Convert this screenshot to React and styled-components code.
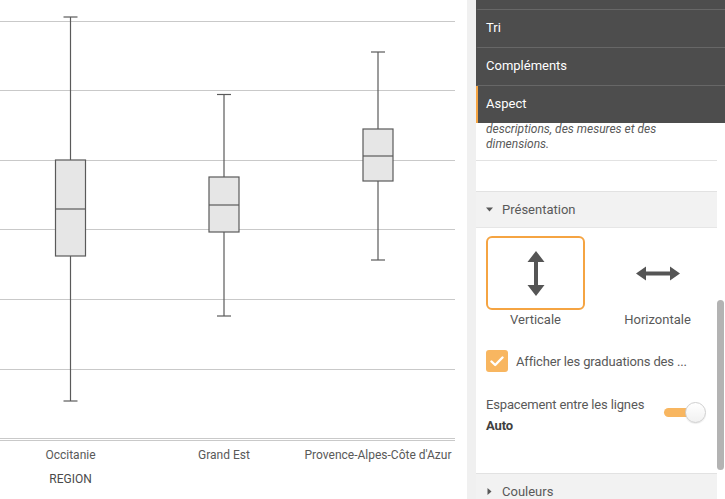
import React from "react";
import styled, { createGlobalStyle } from "styled-components";

const Global = createGlobalStyle`
  html, body { margin: 0; padding: 0; background: #fff; }
  body { font-family: Roboto, "Noto Sans", "Liberation Sans", sans-serif; overflow: hidden; }
  * { box-sizing: border-box; }
`;

const ORANGE = "#f5a442";
const ORANGE_SOFT = "#f8b660";

const Page = styled.div`
  display: flex;
  width: 725px;
  height: 499px;
  overflow: hidden;
  background: #fff;
`;

const ChartArea = styled.div`
  flex: none;
  width: 467px;
  height: 499px;
  svg { display: block; }
`;

const Gutter = styled.div`
  flex: none;
  width: 9px;
  background: #f0f0f0;
`;

const Panel = styled.div`
  flex: 1;
  min-width: 0;
  display: flex;
  flex-direction: column;
`;

const Nav = styled.nav`
  flex: none;
  background: #4d4d4d;
`;

const NavItem = styled.div`
  height: ${(p) => p.$h}px;
  display: flex;
  align-items: center;
  padding-left: 8px;
  padding-bottom: 2px;
  color: #fff;
  font-size: 13px;
  border-left: 2px solid ${(p) => (p.$active ? ORANGE : "transparent")};
  border-bottom: ${(p) => (p.$last ? "none" : "1px solid #676767")};
  overflow: hidden;
`;

const Content = styled.div`
  flex: 1;
  min-height: 0;
  display: flex;
`;

const ScrollBody = styled.div`
  flex: 1;
  min-width: 0;
  overflow: hidden;
  display: flex;
  flex-direction: column;
`;

const ScrollTrack = styled.div`
  flex: none;
  width: 8px;
  padding-top: 177px;
`;

const Thumb = styled.div`
  width: 7px;
  height: 170px;
  border-radius: 4px;
  background: #b3b3b3;
`;

const Description = styled.p`
  margin: -1px 0 0;
  padding: 0 10px 8px;
  font-size: 12px;
  line-height: 15px;
  font-style: italic;
  color: #595959;
  border-bottom: 1px solid #e2e2e2;
`;

const Spacer = styled.div`
  height: 30px;
  flex: none;
`;

const SectionHeader = styled.div`
  flex: none;
  height: 37px;
  display: flex;
  align-items: center;
  gap: 9px;
  padding-left: 10px;
  background: #f2f2f2;
  border-top: 1px solid #e2e2e2;
  border-bottom: 1px solid #e6e6e6;
  color: #595959;
  font-size: 13px;
`;

const SectionBody = styled.div`
  padding: 8px 10px 0;
  height: ${(p) => p.$h}px;
  flex: none;
`;

const Options = styled.div`
  display: grid;
  grid-template-columns: 1fr 1fr;
  column-gap: 23px;
`;

const Option = styled.div`
  display: flex;
  flex-direction: column;
  align-items: center;
`;

const OptionCard = styled.div`
  width: 100%;
  height: 74px;
  display: flex;
  align-items: center;
  justify-content: center;
  border: 2px solid ${(p) => (p.$selected ? ORANGE : "transparent")};
  border-radius: 6px;
`;

const OptionLabel = styled.div`
  margin-top: 2px;
  font-size: 13px;
  line-height: 16px;
  color: #595959;
`;

const CheckRow = styled.label`
  margin-top: 22px;
  display: flex;
  align-items: center;
  gap: 8px;
  font-size: 13px;
  letter-spacing: -0.15px;
  color: #595959;
  white-space: nowrap;
`;

const CheckBox = styled.span`
  flex: none;
  width: 22px;
  height: 22px;
  border-radius: 3px;
  background: ${ORANGE_SOFT};
  display: flex;
  align-items: center;
  justify-content: center;
`;

const SpacingRow = styled.div`
  margin-top: 25px;
  display: flex;
  justify-content: space-between;
  align-items: flex-start;
  padding-right: 1px;
`;

const SpacingText = styled.div`
  font-size: 13px;
  line-height: 16px;
  letter-spacing: -0.15px;
  color: #595959;
`;

const SpacingValue = styled.div`
  margin-top: 5px;
  font-weight: 700;
  color: #404040;
`;

const Toggle = styled.div`
  position: relative;
  margin-top: 5px;
  width: 42px;
  height: 21px;
`;

const ToggleTrack = styled.span`
  position: absolute;
  left: 0;
  top: 6px;
  width: 36px;
  height: 9px;
  border-radius: 5px;
  background: ${ORANGE_SOFT};
`;

const ToggleKnob = styled.span`
  position: absolute;
  right: 0;
  top: 0;
  width: 21px;
  height: 21px;
  border-radius: 50%;
  background: linear-gradient(#ffffff, #f1f1f1);
  border: 1px solid #cfcfcf;
  box-shadow: 0 1px 1px rgba(0, 0, 0, 0.08);
`;

const Caret = ({ open }) => (
  <svg width="7" height="7" viewBox="0 0 7 7">
    {open ? (
      <polygon points="0,1.5 7,1.5 3.5,5.5" fill="#595959" />
    ) : (
      <polygon points="1.5,0 5.5,3.5 1.5,7" fill="#595959" />
    )}
  </svg>
);

const VerticalArrow = () => (
  <svg width="18" height="45" viewBox="0 0 18 45">
    <polygon points="9,0 17.5,11 11,11 11,34 17.5,34 9,45 0.5,34 7,34 7,11 0.5,11" fill="#555" />
  </svg>
);

const HorizontalArrow = () => (
  <svg width="44" height="15" viewBox="0 0 44 15">
    <polygon points="0,7.5 10,0.5 10,5.5 34,5.5 34,0.5 44,7.5 34,14.5 34,9.5 10,9.5 10,14.5" fill="#555" />
  </svg>
);

const grid = [21, 90, 160, 229, 299, 369];
const boxes = [
  { cx: 70.5, top: 17, q3: 160, med: 209, q1: 256, low: 401, label: "Occitanie" },
  { cx: 224, top: 94.5, q3: 177, med: 205, q1: 232, low: 316, label: "Grand Est" },
  { cx: 378, top: 52, q3: 129, med: 156, q1: 181, low: 260, label: "Provence-Alpes-Côte d'Azur" },
];

const BoxPlot = () => (
  <svg width="467" height="499" viewBox="0 0 467 499">
    {grid.map((y) => (
      <line key={y} x1="0" x2="455" y1={y + 0.5} y2={y + 0.5} stroke="#c9c9c9" strokeWidth="1" />
    ))}
    <line x1="0" x2="455" y1="438.5" y2="438.5" stroke="#c9c9c9" strokeWidth="1" />
    <line x1="0" x2="455" y1="440.5" y2="440.5" stroke="#c9c9c9" strokeWidth="1" />
    {boxes.map((b) => (
      <g key={b.label} stroke="#5a5a5a" strokeWidth="1.2" fill="none">
        <line x1={b.cx} x2={b.cx} y1={b.top} y2={b.q3} />
        <line x1={b.cx} x2={b.cx} y1={b.q1} y2={b.low} />
        <line x1={b.cx - 7} x2={b.cx + 7} y1={b.top} y2={b.top} />
        <line x1={b.cx - 7} x2={b.cx + 7} y1={b.low} y2={b.low} />
        <rect x={b.cx - 15} y={b.q3} width="30" height={b.q1 - b.q3} fill="#e6e6e6" />
        <line x1={b.cx - 15} x2={b.cx + 15} y1={b.med} y2={b.med} />
        <text
          x={b.cx}
          y="459"
          textAnchor="middle"
          fill="#595959"
          stroke="none"
          fontSize="12"
          fontFamily="Roboto, sans-serif"
        >
          {b.label}
        </text>
      </g>
    ))}
    <text x="70.5" y="483" textAnchor="middle" fill="#4a4a4a" fontSize="12" fontFamily="Roboto, sans-serif">
      REGION
    </text>
  </svg>
);

export default function App() {
  return (
    <>
      <Global />
      <Page>
        <ChartArea>
          <BoxPlot />
        </ChartArea>
        <Gutter />
        <Panel>
          <Nav>
            <NavItem $h={10} />
            <NavItem $h={38}>Tri</NavItem>
            <NavItem $h={38}>Compléments</NavItem>
            <NavItem $h={37} $active $last>
              Aspect
            </NavItem>
          </Nav>
          <Content>
            <ScrollBody>
              <Description>
                descriptions, des mesures et des
                <br />
                dimensions.
              </Description>
              <Spacer />
              <SectionHeader>
                <Caret open />
                Présentation
              </SectionHeader>
              <SectionBody $h={245}>
                <Options>
                  <Option>
                    <OptionCard $selected>
                      <VerticalArrow />
                    </OptionCard>
                    <OptionLabel>Verticale</OptionLabel>
                  </Option>
                  <Option>
                    <OptionCard>
                      <HorizontalArrow />
                    </OptionCard>
                    <OptionLabel>Horizontale</OptionLabel>
                  </Option>
                </Options>
                <CheckRow>
                  <CheckBox>
                    <svg width="14" height="11" viewBox="0 0 14 11">
                      <polyline points="1.5,5.5 5.2,9 12.5,1.5" fill="none" stroke="#fff" strokeWidth="2.4" strokeLinecap="round" strokeLinejoin="round" />
                    </svg>
                  </CheckBox>
                  Afficher les graduations des ...
                </CheckRow>
                <SpacingRow>
                  <SpacingText>
                    Espacement entre les lignes
                    <SpacingValue>Auto</SpacingValue>
                  </SpacingText>
                  <Toggle>
                    <ToggleTrack />
                    <ToggleKnob />
                  </Toggle>
                </SpacingRow>
              </SectionBody>
              <SectionHeader>
                <Caret />
                Couleurs
              </SectionHeader>
            </ScrollBody>
            <ScrollTrack>
              <Thumb />
            </ScrollTrack>
          </Content>
        </Panel>
      </Page>
    </>
  );
}
